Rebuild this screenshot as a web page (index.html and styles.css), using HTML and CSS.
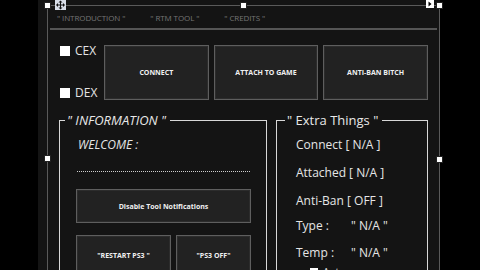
FILE: index.html
```html
<!DOCTYPE html>
<html lang="en">

<head>
    <meta charset="UTF-8">
    <title>RTM Tool</title>
    <link rel="stylesheet" href="styles.css">
</head>

<body>
    <div class="form">
        <div class="frame">
            <!-- designer selection handles -->
            <span class="handle h-tl"></span>
            <span class="handle h-tm"></span>
            <span class="handle h-tr"></span>
            <span class="handle h-ml"></span>
            <span class="handle h-mr"></span>
            <span class="move-icon">
                <svg width="11" height="10" viewBox="0 0 11 10">
                    <path d="M5.5 0.5 L3.5 2.5 H5 V4.5 H3 V3 L1 5 L3 7 V5.5 H5 V7.5 H3.5 L5.5 9.5 L7.5 7.5 H6 V5.5 H8 V7 L10 5 L8 3 V4.5 H6 V2.5 H7.5 Z" fill="#111"/>
                </svg>
            </span>
            <span class="tag-icon">
                <svg width="8" height="8" viewBox="0 0 8 8">
                    <path d="M2.5 1.5 L5.5 4 L2.5 6.5 Z" fill="#000"/>
                </svg>
            </span>

            <div class="tabs">
                <span>" INTRODUCTION "</span>
                <span>" RTM TOOL "</span>
                <span>" CREDITS "</span>
            </div>
            <div class="tab-line"></div>

            <div class="top-row">
                <div class="consoles">
                    <label class="check"><span class="box"></span>CEX</label>
                    <label class="check"><span class="box"></span>DEX</label>
                </div>
                <div class="actions">
                    <button class="btn">CONNECT</button>
                    <button class="btn">ATTACH TO GAME</button>
                    <button class="btn">ANTI-BAN BITCH</button>
                </div>
            </div>

            <div class="groups">
                <fieldset class="group info">
                    <legend>" INFORMATION "</legend>
                    <p class="welcome">WELCOME :</p>
                    <div class="dots"></div>
                    <button class="btn wide">Disable Tool Notifications</button>
                    <div class="ps3-row">
                        <button class="btn restart">"RESTART PS3 "</button>
                        <button class="btn off">"PS3 OFF"</button>
                    </div>
                </fieldset>

                <fieldset class="group extra">
                    <legend>" Extra Things "</legend>
                    <div class="stat">Connect [ N/A ]</div>
                    <div class="stat">Attached [ N/A ]</div>
                    <div class="stat">Anti-Ban [ OFF ]</div>
                    <div class="stat type"><span class="key">Type :</span>" N/A "</div>
                    <div class="stat"><span class="key">Temp :</span>" N/A "</div>
                    <label class="check small"><span class="box"></span>Auto</label>
                </fieldset>
            </div>
        </div>
    </div>
</body>

</html>
```

FILE: styles.css
```css
/* Basic Styles */
html,
body {
    margin: 0;
    padding: 0;
    width: 480px;
    height: 270px;
    overflow: hidden;
    background-color: #000;
    font-family: "Open Sans", "DejaVu Sans", sans-serif;
}

.form {
    margin-left: 38px;
    width: 402px;
    height: 270px;
    padding-top: 5px;
    box-sizing: border-box;
    background-color: #141414;
}

.frame {
    position: relative;
    margin-left: 9px;
    width: 391px;
    height: 300px;
    border: 1px solid #5a5a5a;
    border-bottom: none;
}

/* selection handles */
.handle {
    position: absolute;
    width: 5px;
    height: 5px;
    background-color: #fff;
    border: 1px solid #222;
}

.h-tl { left: -4px; top: -4px; }
.h-tm { left: 192px; top: -4px; }
.h-tr { left: 388px; top: -4px; }
.h-ml { left: -4px; top: 149px; }
.h-mr { left: 388px; top: 150px; }

.move-icon {
    position: absolute;
    left: 7px;
    top: -6px;
    width: 11px;
    height: 10px;
    background-color: #d8dee8;
    display: flex;
}

.tag-icon {
    position: absolute;
    left: 378px;
    top: -6px;
    width: 8px;
    height: 8px;
    background-color: #fff;
    display: flex;
}

.tabs {
    height: 22px;
    display: flex;
    align-items: center;
    padding-left: 9px;
    gap: 25px;
    font-size: 8px;
    letter-spacing: -0.1px;
    color: #747474;
}

.tab-line {
    height: 2px;
    margin: 0 2px;
    background-color: #555;
}

.top-row {
    display: flex;
    margin: 15px 0 0 11px;
    height: 55px;
}

.consoles {
    width: 45px;
    display: flex;
    flex-direction: column;
    justify-content: space-between;
    padding: 0 0 1px 1px;
    box-sizing: border-box;
}

.check {
    display: flex;
    align-items: center;
    gap: 5px;
    font-size: 12px;
    line-height: 12px;
    color: #e4e4e4;
}

.box {
    width: 10px;
    height: 10px;
    background-color: #fff;
}

.actions {
    flex: 1;
    display: grid;
    grid-template-columns: repeat(3, 1fr);
    gap: 5px;
    margin-right: 11px;
}

.btn {
    background-color: #222;
    border: 1px solid #5e5e5e;
    box-shadow: inset 0 0 0 1px #2c2c2c;
    color: #f0f0f0;
    font-family: "Open Sans", sans-serif;
    font-weight: bold;
    font-size: 7px;
    padding: 0;
    margin: 0;
}

.groups {
    display: flex;
    gap: 9px;
    margin: 12px 11px 0 11px;
}

.group {
    margin: 0;
    border: 1px solid #d8d8d8;
    padding: 9px 0 0 16px;
    color: #e6e6e6;
    height: 190px;
    box-sizing: border-box;
}

.group legend {
    margin-left: -11px;
    padding: 0 4px 0 2px;
    font-size: 13px;
    line-height: 16px;
    color: #e8e8e8;
}

.info {
    width: 208px;
}

.info legend {
    font-style: italic;
}

.welcome {
    margin: 0 0 0 2px;
    font-size: 12px;
    line-height: 16px;
    font-style: italic;
}

.dots {
    margin: 18px 16px 0 1px;
    border-top: 1px dotted #cfcfcf;
}

.wide {
    display: block;
    margin-top: 17px;
    width: 175px;
    height: 34px;
}

.ps3-row {
    display: flex;
    gap: 5px;
    margin-top: 12px;
}

.restart {
    width: 95px;
    height: 40px;
}

.off {
    width: 75px;
    height: 40px;
}

.extra {
    flex: 1;
    padding-top: 3px;
    padding-left: 19px;
}

.stat {
    font-size: 12px;
    line-height: 28px;
    white-space: nowrap;
}

.stat.type {
    line-height: 22px;
    margin-bottom: 2px;
}

.key {
    display: inline-block;
    width: 55px;
}

.check.small {
    margin: -1px 0 0 14px;
    font-size: 10px;
}

.check.small .box {
    width: 8px;
    height: 8px;
}
```
